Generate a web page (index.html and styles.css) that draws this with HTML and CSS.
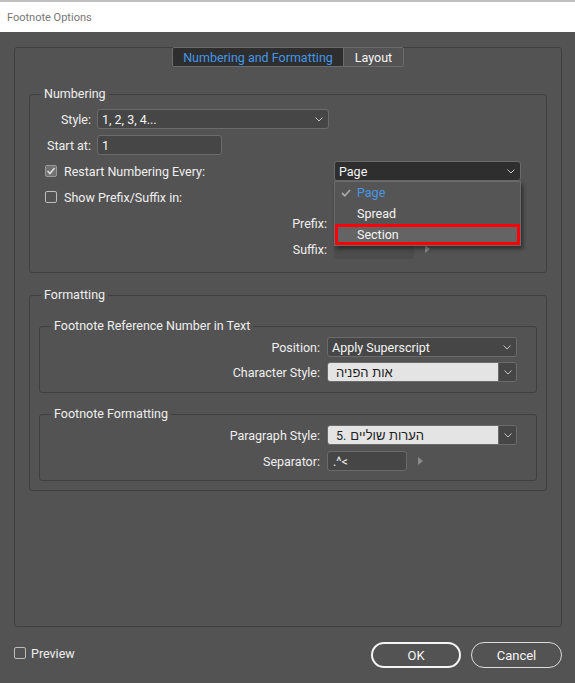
FILE: index.html
```html
<!DOCTYPE html>
<html>
<head>
<meta charset="utf-8">
<link rel="stylesheet" href="styles.css">
</head>
<body>
<div class="titlebar"><span>Footnote Options</span></div>
<div class="dialog">
  <div class="panel">
    <div class="tabs">
      <div class="tab tab-active">Numbering and Formatting</div>
      <div class="tab tab-layout">Layout</div>
    </div>
    <fieldset class="group numbering">
      <legend>Numbering</legend>
      <div class="content">
        <div class="row">
          <span class="lbl-n">Style:</span>
          <div class="select w-style"><span>1, 2, 3, 4...</span><svg class="chev" width="8" height="5" viewBox="0 0 8 5"><polyline points="0.5,0.5 4,4 7.5,0.5"/></svg></div>
        </div>
        <div class="row">
          <span class="lbl-n">Start at:</span>
          <div class="input w-start"><span>1</span></div>
        </div>
        <div class="grid-row">
          <div class="check"><span class="box checked"><svg width="10" height="10" viewBox="0 0 10 10"><polyline points="1.5,5 4,7.5 8.5,2"/></svg></span><span>Restart Numbering Every:</span></div>
          <div class="select dark page-select"><span>Page</span><svg class="chev" width="8" height="5" viewBox="0 0 8 5"><polyline points="0.5,0.5 4,4 7.5,0.5"/></svg>
            <div class="menu">
              <div class="item current"><svg class="tick" width="10" height="8" viewBox="0 0 10 8"><polyline points="1,4 3.8,6.8 9,1"/></svg>Page</div>
              <div class="item">Spread</div>
              <div class="item hilite">Section</div>
            </div>
          </div>
        </div>
        <div class="grid-row">
          <div class="check"><span class="box"></span><span>Show Prefix/Suffix in:</span></div>
          <div></div>
        </div>
        <div class="grid-row">
          <span class="lbl-r">Prefix:</span>
          <div class="field-arrow"><div class="input w-fix dim"></div><span class="tri"></span></div>
        </div>
        <div class="grid-row">
          <span class="lbl-r">Suffix:</span>
          <div class="field-arrow"><div class="input w-fix dim"></div><span class="tri"></span></div>
        </div>
      </div>
    </fieldset>
    <fieldset class="group formatting">
      <legend>Formatting</legend>
      <div class="content">
        <fieldset class="group sub sub1">
          <legend>Footnote Reference Number in Text</legend>
          <div class="content">
            <div class="row">
              <span class="lbl-f">Position:</span>
              <div class="select w-f"><span>Apply Superscript</span><svg class="chev" width="8" height="5" viewBox="0 0 8 5"><polyline points="0.5,0.5 4,4 7.5,0.5"/></svg></div>
            </div>
            <div class="row">
              <span class="lbl-f">Character Style:</span>
              <div class="combo w-f"><span class="light"><span>אות הפניה</span></span><span class="cbtn"><svg class="chev" width="8" height="5" viewBox="0 0 8 5"><polyline points="0.5,0.5 4,4 7.5,0.5"/></svg></span></div>
            </div>
          </div>
        </fieldset>
        <fieldset class="group sub sub2">
          <legend>Footnote Formatting</legend>
          <div class="content">
            <div class="row">
              <span class="lbl-f">Paragraph Style:</span>
              <div class="combo w-f"><span class="light"><span class="num">5.</span><span>הערות שוליים</span></span><span class="cbtn"><svg class="chev" width="8" height="5" viewBox="0 0 8 5"><polyline points="0.5,0.5 4,4 7.5,0.5"/></svg></span></div>
            </div>
            <div class="row">
              <span class="lbl-f">Separator:</span>
              <div class="field-arrow"><div class="input w-sep"><span>.^&lt;</span></div><span class="tri"></span></div>
            </div>
          </div>
        </fieldset>
      </div>
    </fieldset>
  </div>
  <div class="footer">
    <div class="check preview"><span class="box"></span><span>Preview</span></div>
    <div class="buttons">
      <div class="btn ok">OK</div>
      <div class="btn cancel">Cancel</div>
    </div>
  </div>
</div>
</body>
</html>
```
FILE: styles.css
```css
* { box-sizing: border-box; }
html, body { margin: 0; padding: 0; }
body {
  width: 575px;
  height: 683px;
  overflow: hidden;
  background: #535353;
  color: #efefef;
  font-family: Roboto, "Liberation Sans", "DejaVu Sans", sans-serif;
  font-size: 12.5px;
}
.titlebar {
  height: 32px;
  background: #ffffff;
  border-top: 2px solid #bfbfbf;
  display: flex;
  align-items: center;
  padding-left: 7px;
  color: #767676;
  font-size: 11px;
}
.dialog {
  height: 651px;
  padding: 15px 13px 0 14px;
  background: #535353;
}
.panel {
  height: 580px;
  border: 1px solid #3f3f3f;
  border-radius: 3px;
  padding: 0 14px;
}
.tabs {
  display: flex;
  justify-content: center;
  margin-top: -1px;
  height: 20px;
}
.tab {
  height: 20px;
  border: 1px solid #6b6b6b;
  display: flex;
  align-items: center;
  justify-content: center;
  background: #535353;
  color: #f6f6f6;
}
.tab-active {
  width: 172px;
  background: #2e2e2e;
  color: #4597e6;
  border-radius: 2px 0 0 2px;
}
.tab-layout {
  width: 61px;
  margin-left: -1px;
  border-radius: 0 2px 2px 0;
}
.group {
  margin: 0;
  padding: 0;
  min-width: 0;
  border: 1px solid #3f3f3f;
  border-radius: 3px;
}
.group > legend {
  margin-left: 11px;
  padding: 0 3px;
  height: 16px;
  line-height: 16px;
  color: #efefef;
}
.numbering { margin-top: 19px; }
.numbering > .content {
  padding: 7px 0 13px 0;
  display: flex;
  flex-direction: column;
  gap: 6px;
}
.row {
  display: flex;
  align-items: center;
  height: 20px;
}
.lbl-n {
  width: 61px;
  margin-right: 6px;
  text-align: right;
}
.grid-row {
  display: grid;
  grid-template-columns: 304px 187px;
  align-items: center;
  height: 20px;
}
.lbl-r {
  text-align: right;
  padding-right: 7px;
}
.check {
  display: flex;
  align-items: center;
  gap: 7px;
  margin-left: 15px;
}
.box {
  width: 12px;
  height: 12px;
  border: 1px solid #bcbcbc;
  border-radius: 2px;
  display: flex;
  align-items: center;
  justify-content: center;
}
.box.checked {
  background: #727272;
  border-color: #9a9a9a;
}
.box svg polyline {
  fill: none;
  stroke: #dadada;
  stroke-width: 1.6;
}
.select, .input {
  height: 20px;
  border: 1px solid #6b6b6b;
  border-radius: 3px;
  background: #464646;
  display: flex;
  align-items: center;
  padding-left: 4px;
  color: #f4f4f4;
}
.select {
  justify-content: space-between;
  padding-right: 5px;
  position: relative;
}
.select.dark { background: #2e2e2e; }
.chev polyline {
  fill: none;
  stroke: #c4c4c4;
  stroke-width: 1;
}
.w-style { width: 232px; }
.w-start { width: 125px; }
.page-select { width: 187px; }
.w-fix { width: 80px; height: 19px; }
.dim { background: #4c4c4c; border-color: #4c4c4c; }
.field-arrow {
  display: flex;
  align-items: center;
  gap: 11px;
}
.tri {
  width: 0;
  height: 0;
  border-left: 5px solid #8c8c8c;
  border-top: 4px solid transparent;
  border-bottom: 4px solid transparent;
}
.menu {
  position: absolute;
  top: 19px;
  left: -1px;
  width: 187px;
  height: 65px;
  background: #555555;
  border: 1px solid #6a6a6a;
  box-shadow: 2px 3px 4px rgba(0, 0, 0, 0.45);
  z-index: 5;
}
.item {
  height: 21px;
  display: flex;
  align-items: center;
  padding-left: 22px;
  position: relative;
  color: #f4f4f4;
}
.item.current { color: #4597e6; }
.tick {
  position: absolute;
  left: 6px;
  top: 7px;
}
.tick polyline {
  fill: none;
  stroke: #a6a6a6;
  stroke-width: 1.8;
}
.item.hilite {
  background: #646464;
  border: 3px solid #ff0000;
  padding-left: 19px;
}
.formatting { margin-top: 14px; }
.formatting > .content { padding: 15px 9px 9px 9px; }
.sub1 > .content {
  padding: 3px 0 10px 0;
  display: flex;
  flex-direction: column;
  gap: 5px;
}
.sub2 { margin-top: 13px; }
.sub2 > .content {
  padding: 3px 0 9px 0;
  display: flex;
  flex-direction: column;
  gap: 6px;
}
.lbl-f {
  width: 280px;
  margin-right: 7px;
  text-align: right;
}
.w-f { width: 190px; }
.combo {
  height: 20px;
  display: flex;
  border: 1px solid #6b6b6b;
  border-radius: 3px;
  overflow: hidden;
}
.light {
  flex: 1;
  background: #e4e4e4;
  color: #1e1e1e;
  display: flex;
  align-items: center;
  gap: 4px;
  padding-left: 8px;
  font-family: "Liberation Sans", "DejaVu Sans", sans-serif;
  font-size: 13px;
}
.light .num { font-family: Roboto, sans-serif; font-size: 12.5px; }
.cbtn {
  width: 18px;
  background: #464646;
  border-left: 1px solid #6b6b6b;
  display: flex;
  align-items: center;
  justify-content: center;
}
.w-sep { width: 80px; padding-left: 5px; }
.footer {
  display: flex;
  align-items: center;
  margin-top: 15px;
  height: 26px;
}
.check.preview {
  margin-left: 0;
  gap: 5px;
  margin-top: -4px;
}
.buttons {
  margin-left: auto;
  display: flex;
  gap: 10px;
}
.btn {
  height: 26px;
  border-radius: 13px;
  display: flex;
  align-items: center;
  justify-content: center;
  color: #f6f6f6;
  font-size: 13px;
}
.ok {
  width: 90px;
  border: 2px solid #f4f4f4;
}
.cancel {
  width: 91px;
  border: 1px solid #dcdcdc;
}
```
